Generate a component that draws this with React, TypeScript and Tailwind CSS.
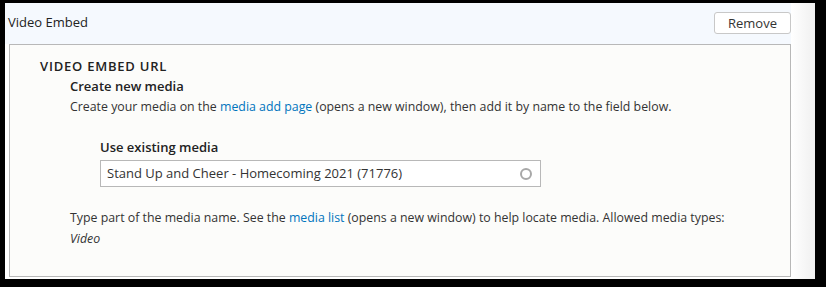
import React from "react";

const Link = ({ children }: { children: React.ReactNode }) => (
  <a href="#" className="text-[#0074bd] no-underline">
    {children}
  </a>
);

export default function App() {
  return (
    <div className="w-[826px] h-[287px] bg-black pt-[3px] pl-[5px] pr-[11px] pb-[8px] font-['Open_Sans',sans-serif] text-[13px] text-[#333]">
      <div className="h-full bg-white flex">
        <div className="flex-1 flex flex-col">
          <div className="h-[41px] bg-[#f5f9fe] flex items-center justify-between pl-[3px] pr-0">
            <span className="text-[13px] text-[#222] -mt-[1px]">Video Embed</span>
            <button className="h-[22px] w-[77px] mt-[-1px] rounded-[3px] border border-[#c8c8c8] bg-white text-[13px] text-[#333] leading-none">
              Remove
            </button>
          </div>
          <div className="flex-1 ml-[4px] border border-[#b8b8b8] bg-[#fcfcfa] pl-[30px] pt-[11px]">
            <div className="text-[13px] font-semibold tracking-[0.06em] text-[#222] leading-[20px]">
              VIDEO EMBED URL
            </div>
            <div className="pl-[30px]">
              <div className="font-semibold text-[#222] leading-[20px]">Create new media</div>
              <div className="text-[12.35px] leading-[20px] mt-[1px]">
                Create your media on the <Link>media add page</Link> (opens a new window), then add it by name to the field below.
              </div>
              <div className="pl-[30px] mt-[20px]">
                <div className="font-semibold text-[#222] leading-[20px]">Use existing media</div>
                <div className="mt-[3px] w-[441px] h-[27px] border border-[#b8b8b8] bg-white flex items-center justify-between pl-[6px] pr-[8px]">
                  <span className="text-[#333]">Stand Up and Cheer - Homecoming 2021 (71776)</span>
                  <span className="w-[12px] h-[12px] rounded-full border-2 border-[#a8a8a8]" />
                </div>
              </div>
              <div className="mt-[20px] text-[12.35px] leading-[21px]">
                Type part of the media name. See the <Link>media list</Link> (opens a new window) to help locate media. Allowed media types:
                <br />
                <em>Video</em>
              </div>
            </div>
          </div>
          <div className="h-[2px]" />
        </div>
        <div className="w-[24px] bg-gradient-to-r from-white to-[#f0f0f0]" />
      </div>
    </div>
  );
}
